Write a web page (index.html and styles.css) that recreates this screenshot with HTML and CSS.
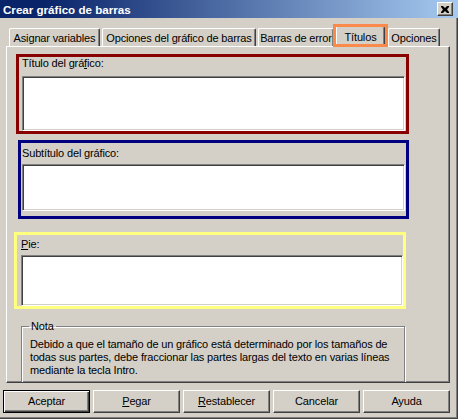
FILE: index.html
```html
<!DOCTYPE html>
<html lang="es">
<head>
<meta charset="utf-8">
<title>Crear gráfico de barras</title>
<link rel="stylesheet" href="styles.css">
</head>
<body>
<div class="win">
  <div class="titlebar">
    <span class="title">Crear gráfico de barras</span>
    <span class="close"><svg width="8" height="7" viewBox="0 0 8 7"><path d="M0 0h2l2 2 2-2h2v1L6 3.5 8 6v1H6L4 5 2 7H0V6l2-2.5L0 1z" fill="#000"/></svg></span>
  </div>
  <div class="tabs">
    <div class="tab t1">Asignar variables</div>
    <div class="tab t2">Opciones del gráfico de barras</div>
    <div class="tab t3">Barras de error</div>
    <div class="tab sel">Títulos</div>
    <div class="tab t5">Opciones</div>
  </div>
  <div class="panel">
    <div class="field red">
      <div class="lbl">Título del grá<u>f</u>ico:</div>
      <div class="box"></div>
    </div>
    <div class="field blue">
      <div class="lbl">Subtítulo del gráfico:</div>
      <div class="box"></div>
    </div>
    <div class="field yellow">
      <div class="lbl"><u>P</u>ie:</div>
      <div class="box"></div>
    </div>
    <fieldset class="nota">
      <legend>Nota</legend>
      <p>Debido a que el tamaño de un gráfico está determinado por los tamaños de<br>todas sus partes, debe fraccionar las partes largas del texto en varias líneas<br>mediante la tecla Intro.</p>
    </fieldset>
  </div>
  <div class="buttons">
    <div class="btn def"><span>Aceptar</span></div>
    <div class="btn"><span><u>P</u>egar</span></div>
    <div class="btn"><span><u>R</u>establecer</span></div>
    <div class="btn"><span>Cancelar</span></div>
    <div class="btn"><span>Ayuda</span></div>
  </div>
</div>
</body>
</html>
```

FILE: styles.css
```css
* { box-sizing: border-box; }
html, body { margin: 0; padding: 0; }
body {
  font-family: "Liberation Sans", Arial, sans-serif;
  font-size: 11px;
  line-height: 13px;
  letter-spacing: -0.15px;
  color: #000;
  background: #d4d0c8;
}
u { text-decoration: underline; text-underline-offset: 1px; }
.win {
  width: 458px;
  height: 419px;
  background: #d4d0c8;
  overflow: hidden;
  box-shadow: inset -1px -1px #404040, inset -2px -2px #808080;
}
.titlebar {
  height: 18px;
  background: linear-gradient(to right, #0a246a 10%, #a6caf0);
  display: flex;
  align-items: center;
  padding-left: 3px;
}
.title {
  color: #fff;
  font-weight: bold;
  font-size: 11.6px;
  letter-spacing: 0;
  flex: 1;
}
.close {
  width: 16px;
  height: 14px;
  margin-right: 5px;
  background: #d4d0c8;
  display: flex;
  align-items: center;
  justify-content: center;
  border-top: 1px solid #fff;
  border-left: 1px solid #fff;
  border-right: 1px solid #404040;
  border-bottom: 1px solid #404040;
  box-shadow: inset -1px -1px #808080;
}
.tabs {
  margin-top: 7px;
  height: 21px;
  display: flex;
  align-items: flex-end;
  padding-left: 9px;
}
.tab {
  height: 18px;
  padding-top: 3px;
  text-align: center;
  background: #d4d0c8;
  border-top: 1px solid #fff;
  border-left: 1px solid #fff;
  border-right: 1px solid #404040;
  border-radius: 2px 2px 0 0;
  box-shadow: inset -1px 0 #808080;
  white-space: nowrap;
}
.t1 { width: 91px; }
.t2 { width: 154px; margin-left: 2px; }
.t3 { width: 76px; margin-left: 2px; }
.sel {
  width: 49px;
  margin-left: 2px;
  height: 21px;
  margin-bottom: -1px;
  padding-top: 4px;
  position: relative;
  z-index: 2;
}
.sel::after {
  content: "";
  position: absolute;
  left: -4px;
  right: -4px;
  top: -3px;
  bottom: 0;
  border: 3px solid #f98a4c;
}
.t5 { width: 52px; margin-left: 3px; }
.panel {
  margin-left: 6px;
  width: 444px;
  height: 337px;
  border-top: 1px solid #fff;
  border-left: 1px solid #fff;
  border-right: 1px solid #404040;
  border-bottom: 1px solid #404040;
  box-shadow: inset -1px -1px #808080;
  overflow: hidden;
  position: relative;
}
.field { border: 3px solid; }
.box {
  background: #fff;
  border: 1px solid;
  border-color: #808080 #fff #fff #808080;
  box-shadow: inset 1px 1px #404040, inset -1px -1px #d4d0c8;
}
.red {
  border-color: #880000;
  margin: 7px 0 0 9px;
  width: 393px;
  height: 80px;
  padding-left: 3px;
}
.red .box { margin-top: 6px; width: 383px; height: 55px; }
.blue {
  border-color: #000080;
  margin: 6px 0 0 11px;
  width: 391px;
  height: 79px;
  padding: 4px 0 0 1px;
}
.blue .box { margin-top: 4px; width: 383px; height: 47px; }
.yellow {
  border-color: #ffff80;
  margin: 13px 0 0 7px;
  width: 392px;
  height: 77px;
  padding: 3px 0 0 4px;
}
.yellow .box { margin-top: 4px; width: 382px; height: 51px; }
.nota {
  margin: 11px 0 0 14px;
  width: 384px;
  height: 90px;
  padding: 0 0 0 8px;
  border: 1px solid #808080;
  box-shadow: inset 1px 1px #fff, 1px 1px #fff;
}
.nota legend {
  padding: 0 2px;
  margin-left: -1px;
  line-height: 13px;
}
.nota p {
  margin: 5px 0 0 0;
  line-height: 13px;
}
.buttons {
  display: flex;
  gap: 3px;
  margin: 7px 0 0 3px;
}
.btn {
  width: 87px;
  height: 23px;
  display: flex;
  align-items: center;
  justify-content: center;
  border-top: 1px solid #fff;
  border-left: 1px solid #fff;
  border-right: 1px solid #404040;
  border-bottom: 1px solid #404040;
  box-shadow: inset -1px -1px #808080;
}
.btn.def {
  border: 1px solid #000;
  box-shadow: inset 1px 1px #fff, inset -1px -1px #404040, inset -2px -2px #808080;
}
```
